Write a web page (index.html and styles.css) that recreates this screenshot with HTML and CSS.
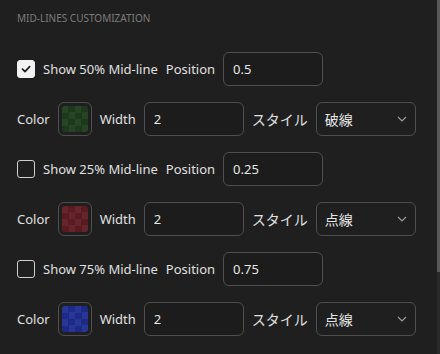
FILE: index.html
```html
<!DOCTYPE html>
<html lang="en">
<head>
<meta charset="UTF-8">
<title>Mid-lines customization</title>
<link rel="stylesheet" href="styles.css">
</head>
<body>

<div class="wrap">

<!-- PANEL -->
<div class="panel">
  <h3 class="section-title">Mid-lines customization</h3>

  <!-- 50% -->
  <div class="row">
    <label class="check">
      <span class="box on"><svg width="12" height="12" viewBox="0 0 12 12"><path d="M2.5 6.2 L5 8.6 L9.6 3.6" fill="none" stroke="#222" stroke-width="1.8" stroke-linecap="round" stroke-linejoin="round"/></svg></span>
      Show 50% Mid-line
    </label>
    <span class="lbl">Position</span>
    <input class="field" type="text" value="0.5">
  </div>
  <div class="row">
    <span class="lbl">Color</span>
    <span class="swatch"><span class="chip green"></span></span>
    <span class="lbl">Width</span>
    <input class="field" type="text" value="2">
    <span class="lbl jp">スタイル</span>
    <div class="select"><span>破線</span><svg width="10" height="6" viewBox="0 0 10 6"><path d="M1 1 L5 5 L9 1" fill="none" stroke="#9a9a9a" stroke-width="1.2"/></svg></div>
  </div>

  <!-- 25% -->
  <div class="row">
    <label class="check">
      <span class="box"></span>
      Show 25% Mid-line
    </label>
    <span class="lbl">Position</span>
    <input class="field" type="text" value="0.25">
  </div>
  <div class="row">
    <span class="lbl">Color</span>
    <span class="swatch"><span class="chip red"></span></span>
    <span class="lbl">Width</span>
    <input class="field" type="text" value="2">
    <span class="lbl jp">スタイル</span>
    <div class="select"><span>点線</span><svg width="10" height="6" viewBox="0 0 10 6"><path d="M1 1 L5 5 L9 1" fill="none" stroke="#9a9a9a" stroke-width="1.2"/></svg></div>
  </div>

  <!-- 75% -->
  <div class="row">
    <label class="check">
      <span class="box"></span>
      Show 75% Mid-line
    </label>
    <span class="lbl">Position</span>
    <input class="field" type="text" value="0.75">
  </div>
  <div class="row">
    <span class="lbl">Color</span>
    <span class="swatch"><span class="chip blue"></span></span>
    <span class="lbl">Width</span>
    <input class="field" type="text" value="2">
    <span class="lbl jp">スタイル</span>
    <div class="select"><span>点線</span><svg width="10" height="6" viewBox="0 0 10 6"><path d="M1 1 L5 5 L9 1" fill="none" stroke="#9a9a9a" stroke-width="1.2"/></svg></div>
  </div>
</div>

<!-- SCROLLBAR -->
<div class="scrollbar"><div class="thumb"></div></div>

</div>

</body>
</html>
```

FILE: styles.css
```css
/* RESET */
*{
  margin:0;
  padding:0;
  box-sizing:border-box;
  font-family:"Noto Sans","Noto Sans CJK JP",sans-serif;
}

body{
  background:#1f1f1f;
  color:#dcdcdc;
  width:440px;
  height:354px;
  overflow:hidden;
}

.wrap{
  display:flex;
  height:354px;
}

/* PANEL */
.panel{
  flex:1;
  padding:11px 0 0 17px;
}

.section-title{
  font-size:10px;
  font-weight:normal;
  text-transform:uppercase;
  color:#7c7c7c;
  line-height:14px;
  margin-bottom:27px;
}

.row{
  display:flex;
  align-items:center;
  gap:8px;
  height:34px;
  margin-bottom:16px;
  font-size:13px;
}

.lbl{
  color:#e0e0e0;
}

.jp{
  font-size:14px;
}

/* CHECKBOX */
.check{
  display:flex;
  align-items:center;
  gap:8px;
  color:#e0e0e0;
}

.box{
  width:18px;
  height:18px;
  border:1.5px solid #d0d0d0;
  border-radius:3px;
  display:flex;
  align-items:center;
  justify-content:center;
}

.box.on{
  background:#f2f2f2;
  border-color:#f2f2f2;
}

/* INPUTS */
.field{
  width:100px;
  height:34px;
  background:#1c1c1c;
  border:1px solid #4e4e4e;
  border-radius:6px;
  color:#e6e6e6;
  font-size:13px;
  padding:0 9px;
  outline:none;
}

.select{
  width:100px;
  height:34px;
  border:1px solid #4e4e4e;
  border-radius:6px;
  display:flex;
  align-items:center;
  justify-content:space-between;
  padding:0 8px 0 8px;
  font-size:14px;
  color:#e6e6e6;
}

/* COLOR SWATCH */
.swatch{
  width:34px;
  height:34px;
  border:1px solid #4e4e4e;
  border-radius:6px;
  display:flex;
  align-items:center;
  justify-content:center;
}

.chip{
  width:26px;
  height:26px;
  border-radius:3px;
  background-size:13px 13px;
}

.green{
  background-image:conic-gradient(#1d381d 25%,#254525 25% 50%,#1d381d 50% 75%,#254525 75%);
}

.red{
  background-image:conic-gradient(#581b21 25%,#66252b 25% 50%,#581b21 50% 75%,#66252b 75%);
}

.blue{
  background-image:conic-gradient(#1e2b86 25%,#283795 25% 50%,#1e2b86 50% 75%,#283795 75%);
}

/* SCROLLBAR */
.scrollbar{
  width:3px;
  background:#2a2a2a;
}

.thumb{
  height:272px;
  background:#585858;
}
```
